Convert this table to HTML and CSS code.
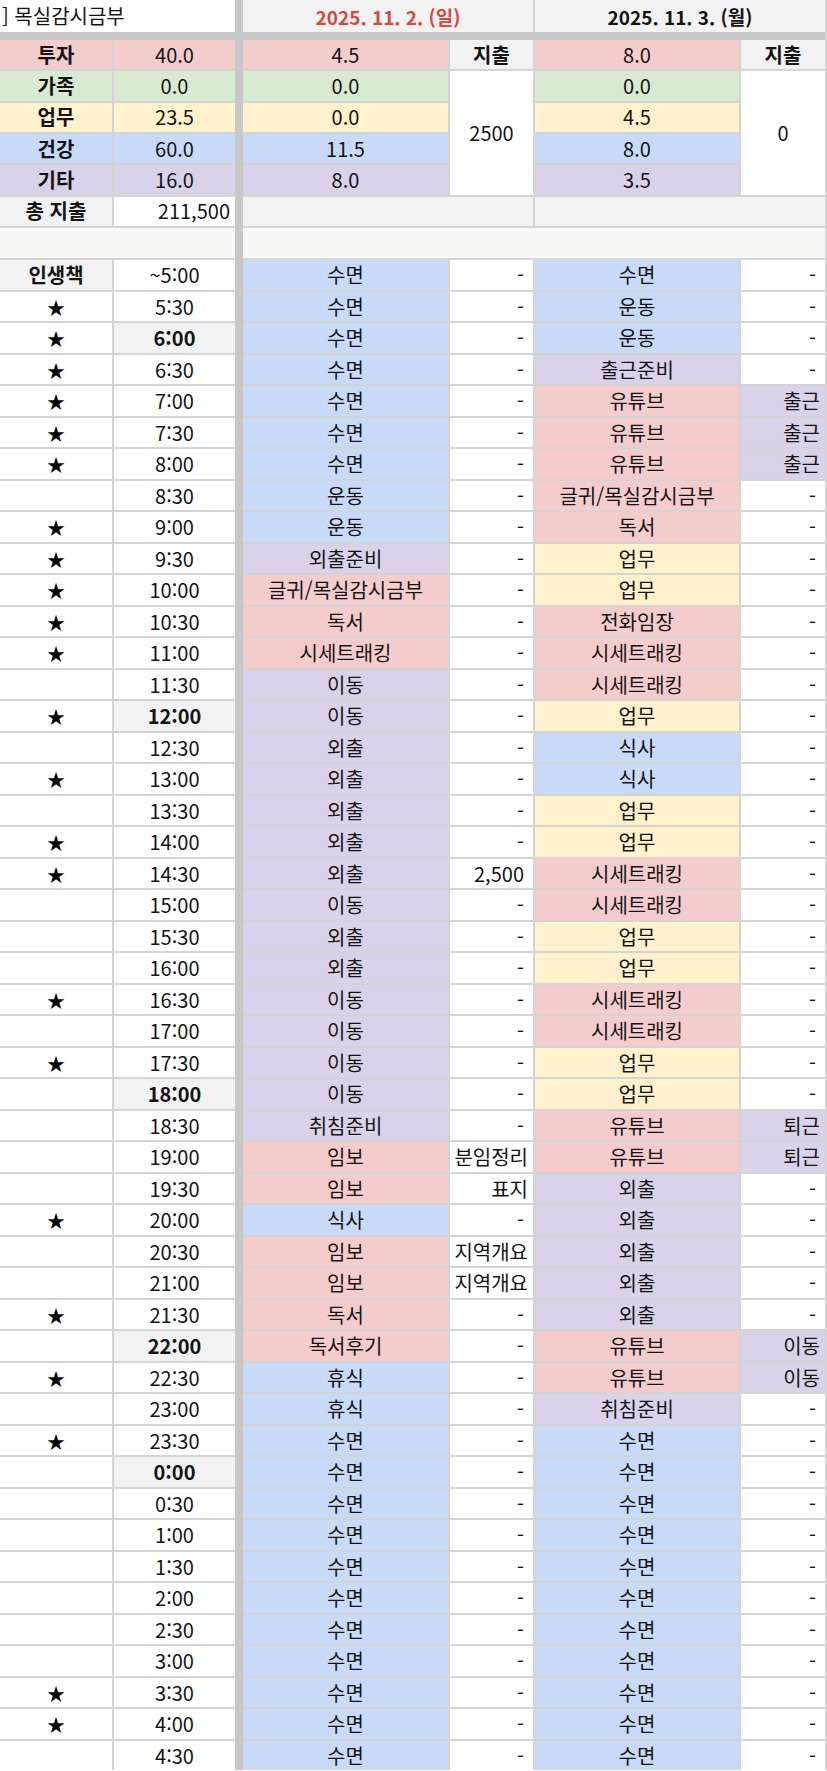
FILE: index.html
```html
<!DOCTYPE html>
<html lang="ko">
<head>
<meta charset="utf-8">
<title>목실감시금부</title>
<link rel="stylesheet" href="styles.css">
</head>
<body>
<div class="sheet">
  <div class="vsep"></div>
  <div class="hsep"></div>

  <div class="c s2 title">] 목실감시금부</div>
  <div class="c s2 hd b date sun">2025. 11. 2. (일)</div>
  <div class="c s2 hd b date">2025. 11. 3. (월)</div>

  <div class="c b rd">투자</div><div class="c rd">40.0</div>
  <div class="c rd">4.5</div><div class="c hd b">지출</div>
  <div class="c rd">8.0</div><div class="c hd b">지출</div>

  <div class="c b gn">가족</div><div class="c gn">0.0</div>
  <div class="c gn">0.0</div><div class="c m4">2500</div>
  <div class="c gn">0.0</div><div class="c m4">0</div>

  <div class="c b yl">업무</div><div class="c yl">23.5</div>
  <div class="c yl">0.0</div>
  <div class="c yl">4.5</div>

  <div class="c b bl">건강</div><div class="c bl">60.0</div>
  <div class="c bl">11.5</div>
  <div class="c bl">8.0</div>

  <div class="c b pp">기타</div><div class="c pp">16.0</div>
  <div class="c pp">8.0</div>
  <div class="c pp">3.5</div>

  <div class="c hd b">총 지출</div><div class="c r">211,500</div>
  <div class="c s2 hd"></div>
  <div class="c s2 hd"></div>

  <div class="c s2 blank"></div>
  <div class="c s4 blank"></div>

  <div class="c hd b">인생책</div><div class="c">~5:00</div><div class="c bl">수면</div><div class="c n">-</div><div class="c bl">수면</div><div class="c n">-</div>
  <div class="c star">★</div><div class="c">5:30</div><div class="c bl">수면</div><div class="c n">-</div><div class="c bl">운동</div><div class="c n">-</div>
  <div class="c star">★</div><div class="c hd b">6:00</div><div class="c bl">수면</div><div class="c n">-</div><div class="c bl">운동</div><div class="c n">-</div>
  <div class="c star">★</div><div class="c">6:30</div><div class="c bl">수면</div><div class="c n">-</div><div class="c pp">출근준비</div><div class="c n">-</div>
  <div class="c star">★</div><div class="c">7:00</div><div class="c bl">수면</div><div class="c n">-</div><div class="c rd">유튜브</div><div class="c r pp">출근</div>
  <div class="c star">★</div><div class="c">7:30</div><div class="c bl">수면</div><div class="c n">-</div><div class="c rd">유튜브</div><div class="c r pp">출근</div>
  <div class="c star">★</div><div class="c">8:00</div><div class="c bl">수면</div><div class="c n">-</div><div class="c rd">유튜브</div><div class="c r pp">출근</div>
  <div class="c"></div><div class="c">8:30</div><div class="c bl">운동</div><div class="c n">-</div><div class="c rd">글귀/목실감시금부</div><div class="c n">-</div>
  <div class="c star">★</div><div class="c">9:00</div><div class="c bl">운동</div><div class="c n">-</div><div class="c rd">독서</div><div class="c n">-</div>
  <div class="c star">★</div><div class="c">9:30</div><div class="c pp">외출준비</div><div class="c n">-</div><div class="c yl">업무</div><div class="c n">-</div>
  <div class="c star">★</div><div class="c">10:00</div><div class="c rd">글귀/목실감시금부</div><div class="c n">-</div><div class="c yl">업무</div><div class="c n">-</div>
  <div class="c star">★</div><div class="c">10:30</div><div class="c rd">독서</div><div class="c n">-</div><div class="c rd">전화임장</div><div class="c n">-</div>
  <div class="c star">★</div><div class="c">11:00</div><div class="c rd">시세트래킹</div><div class="c n">-</div><div class="c rd">시세트래킹</div><div class="c n">-</div>
  <div class="c"></div><div class="c">11:30</div><div class="c pp">이동</div><div class="c n">-</div><div class="c rd">시세트래킹</div><div class="c n">-</div>
  <div class="c star">★</div><div class="c hd b">12:00</div><div class="c pp">이동</div><div class="c n">-</div><div class="c yl">업무</div><div class="c n">-</div>
  <div class="c"></div><div class="c">12:30</div><div class="c pp">외출</div><div class="c n">-</div><div class="c bl">식사</div><div class="c n">-</div>
  <div class="c star">★</div><div class="c">13:00</div><div class="c pp">외출</div><div class="c n">-</div><div class="c bl">식사</div><div class="c n">-</div>
  <div class="c"></div><div class="c">13:30</div><div class="c pp">외출</div><div class="c n">-</div><div class="c yl">업무</div><div class="c n">-</div>
  <div class="c star">★</div><div class="c">14:00</div><div class="c pp">외출</div><div class="c n">-</div><div class="c yl">업무</div><div class="c n">-</div>
  <div class="c star">★</div><div class="c">14:30</div><div class="c pp">외출</div><div class="c n">2,500</div><div class="c rd">시세트래킹</div><div class="c n">-</div>
  <div class="c"></div><div class="c">15:00</div><div class="c pp">이동</div><div class="c n">-</div><div class="c rd">시세트래킹</div><div class="c n">-</div>
  <div class="c"></div><div class="c">15:30</div><div class="c pp">외출</div><div class="c n">-</div><div class="c yl">업무</div><div class="c n">-</div>
  <div class="c"></div><div class="c">16:00</div><div class="c pp">외출</div><div class="c n">-</div><div class="c yl">업무</div><div class="c n">-</div>
  <div class="c star">★</div><div class="c">16:30</div><div class="c pp">이동</div><div class="c n">-</div><div class="c rd">시세트래킹</div><div class="c n">-</div>
  <div class="c"></div><div class="c">17:00</div><div class="c pp">이동</div><div class="c n">-</div><div class="c rd">시세트래킹</div><div class="c n">-</div>
  <div class="c star">★</div><div class="c">17:30</div><div class="c pp">이동</div><div class="c n">-</div><div class="c yl">업무</div><div class="c n">-</div>
  <div class="c"></div><div class="c hd b">18:00</div><div class="c pp">이동</div><div class="c n">-</div><div class="c yl">업무</div><div class="c n">-</div>
  <div class="c"></div><div class="c">18:30</div><div class="c pp">취침준비</div><div class="c n">-</div><div class="c rd">유튜브</div><div class="c r pp">퇴근</div>
  <div class="c"></div><div class="c">19:00</div><div class="c rd">임보</div><div class="c r">분임정리</div><div class="c rd">유튜브</div><div class="c r pp">퇴근</div>
  <div class="c"></div><div class="c">19:30</div><div class="c rd">임보</div><div class="c r">표지</div><div class="c pp">외출</div><div class="c n">-</div>
  <div class="c star">★</div><div class="c">20:00</div><div class="c bl">식사</div><div class="c n">-</div><div class="c pp">외출</div><div class="c n">-</div>
  <div class="c"></div><div class="c">20:30</div><div class="c rd">임보</div><div class="c r">지역개요</div><div class="c pp">외출</div><div class="c n">-</div>
  <div class="c"></div><div class="c">21:00</div><div class="c rd">임보</div><div class="c r">지역개요</div><div class="c pp">외출</div><div class="c n">-</div>
  <div class="c star">★</div><div class="c">21:30</div><div class="c rd">독서</div><div class="c n">-</div><div class="c pp">외출</div><div class="c n">-</div>
  <div class="c"></div><div class="c hd b">22:00</div><div class="c rd">독서후기</div><div class="c n">-</div><div class="c rd">유튜브</div><div class="c r pp">이동</div>
  <div class="c star">★</div><div class="c">22:30</div><div class="c bl">휴식</div><div class="c n">-</div><div class="c rd">유튜브</div><div class="c r pp">이동</div>
  <div class="c"></div><div class="c">23:00</div><div class="c bl">휴식</div><div class="c n">-</div><div class="c pp">취침준비</div><div class="c n">-</div>
  <div class="c star">★</div><div class="c">23:30</div><div class="c bl">수면</div><div class="c n">-</div><div class="c bl">수면</div><div class="c n">-</div>
  <div class="c"></div><div class="c hd b">0:00</div><div class="c bl">수면</div><div class="c n">-</div><div class="c bl">수면</div><div class="c n">-</div>
  <div class="c"></div><div class="c">0:30</div><div class="c bl">수면</div><div class="c n">-</div><div class="c bl">수면</div><div class="c n">-</div>
  <div class="c"></div><div class="c">1:00</div><div class="c bl">수면</div><div class="c n">-</div><div class="c bl">수면</div><div class="c n">-</div>
  <div class="c"></div><div class="c">1:30</div><div class="c bl">수면</div><div class="c n">-</div><div class="c bl">수면</div><div class="c n">-</div>
  <div class="c"></div><div class="c">2:00</div><div class="c bl">수면</div><div class="c n">-</div><div class="c bl">수면</div><div class="c n">-</div>
  <div class="c"></div><div class="c">2:30</div><div class="c bl">수면</div><div class="c n">-</div><div class="c bl">수면</div><div class="c n">-</div>
  <div class="c"></div><div class="c">3:00</div><div class="c bl">수면</div><div class="c n">-</div><div class="c bl">수면</div><div class="c n">-</div>
  <div class="c star">★</div><div class="c">3:30</div><div class="c bl">수면</div><div class="c n">-</div><div class="c bl">수면</div><div class="c n">-</div>
  <div class="c star">★</div><div class="c">4:00</div><div class="c bl">수면</div><div class="c n">-</div><div class="c bl">수면</div><div class="c n">-</div>
  <div class="c"></div><div class="c">4:30</div><div class="c bl">수면</div><div class="c n">-</div><div class="c bl">수면</div><div class="c n">-</div>
</div>
</body>
</html>
```

FILE: styles.css
```css
* { box-sizing: border-box; }

body {
  margin: 0;
  background: #ffffff;
  font-family: "Noto Sans CJK KR", "Noto Sans", sans-serif;
  font-size: 20px;
  color: #141414;
}

.sheet {
  display: grid;
  width: 827px;
  padding-right: 2px;
  background: #d4d4d4;
  grid-template-columns: 112px 121px 4px 205px 83px 204px 1fr;
  grid-template-rows: 32px 4px repeat(6, 29.33px) 30.5px repeat(48, 29.5px);
  gap: 2px;
}

.vsep {
  grid-column: 3;
  grid-row: 1 / -1;
  margin: 0 -2px;
  background: #c8c8c8;
}

.hsep {
  grid-column: 1 / -1;
  grid-row: 2;
  margin: -2px 0;
  background: #c8c8c8;
}

.c {
  background: #ffffff;
  display: flex;
  align-items: center;
  justify-content: center;
  white-space: nowrap;
  overflow: hidden;
  line-height: 1;
}

.s2 { grid-column: span 2; }
.s4 { grid-column: span 4; }
.m4 { grid-row: span 4; }

.title {
  justify-content: flex-start;
  padding-left: 2px;
}

.hd { background: #f2f2f2; }
.b { font-weight: 700; }
.date { font-size: 19px; }
.sun { color: #d2493f; }

.r {
  justify-content: flex-end;
  padding-right: 5px;
}

.n {
  justify-content: flex-end;
  padding-right: 9px;
}

.blank { background: #f9f9f8; }

.star { font-size: 18px; color: #000; }

.rd { background: #f4cccc; }
.gn { background: #d9ead3; }
.yl { background: #fff2cc; }
.bl { background: #c9daf8; }
.pp { background: #d9d2e9; }
```
